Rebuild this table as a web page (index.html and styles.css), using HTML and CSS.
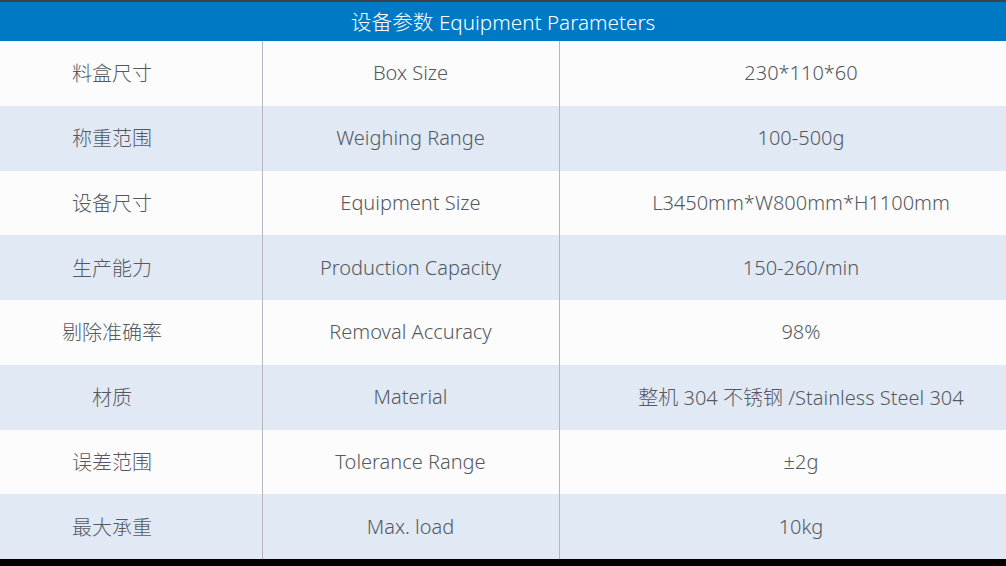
FILE: index.html
```html
<!DOCTYPE html>
<html lang="zh-CN">
<head>
<meta charset="utf-8">
<link rel="stylesheet" href="styles.css">
</head>
<body>
<div class="page">
  <div class="topline"></div>
  <div class="header">设备参数 Equipment Parameters</div>
  <div class="table">
    <div class="row"><div class="cell c1">料盒尺寸</div><div class="cell c2">Box Size</div><div class="cell c3">230*110*60</div></div>
    <div class="row alt"><div class="cell c1">称重范围</div><div class="cell c2">Weighing Range</div><div class="cell c3">100-500g</div></div>
    <div class="row"><div class="cell c1">设备尺寸</div><div class="cell c2">Equipment Size</div><div class="cell c3">L3450mm*W800mm*H1100mm</div></div>
    <div class="row alt"><div class="cell c1">生产能力</div><div class="cell c2">Production Capacity</div><div class="cell c3">150-260/min</div></div>
    <div class="row"><div class="cell c1">剔除准确率</div><div class="cell c2">Removal Accuracy</div><div class="cell c3">98%</div></div>
    <div class="row alt"><div class="cell c1">材质</div><div class="cell c2">Material</div><div class="cell c3">整机 304 不锈钢 /Stainless Steel 304</div></div>
    <div class="row"><div class="cell c1">误差范围</div><div class="cell c2">Tolerance Range</div><div class="cell c3">±2g</div></div>
    <div class="row alt"><div class="cell c1">最大承重</div><div class="cell c2">Max. load</div><div class="cell c3">10kg</div></div>
  </div>
  <div class="bottom"></div>
</div>
</body>
</html>
```
FILE: styles.css
```css
html, body {
  margin: 0;
  padding: 0;
  background: #000;
}
body {
  width: 1006px;
  height: 566px;
  overflow: hidden;
  font-family: "Noto Sans", "Noto Sans CJK SC", sans-serif;
}
.page {
  width: 1006px;
  height: 566px;
  display: flex;
  flex-direction: column;
  overflow: hidden;
}
.topline {
  height: 2px;
  background: #3d4148;
  flex: none;
}
.header {
  height: 39px;
  flex: none;
  background: #0079c5;
  color: #fff;
  font-size: 20.7px;
  font-weight: 300;
  display: flex;
  align-items: center;
  justify-content: center;
  padding-bottom: 1px;
  box-sizing: border-box;
}
.table {
  height: 518px;
  flex: none;
  display: grid;
  grid-template-rows: repeat(8, 1fr);
  width: 1080px;
  margin-left: -38px;
}
.row {
  display: grid;
  grid-template-columns: 300px 298px 482px;
  background: #fcfcfc;
}
.row.alt {
  background: #e1e9f5;
}
.cell {
  display: flex;
  align-items: center;
  justify-content: center;
  color: #55595f;
  font-size: 20px;
  font-weight: 300;
  padding-bottom: 1px;
}
.c1, .c2 {
  border-right: 1px solid #b4b8be;
}
.c1 {
  margin-right: -1px;
}
.bottom {
  flex: 1;
  background: #000;
}
```
